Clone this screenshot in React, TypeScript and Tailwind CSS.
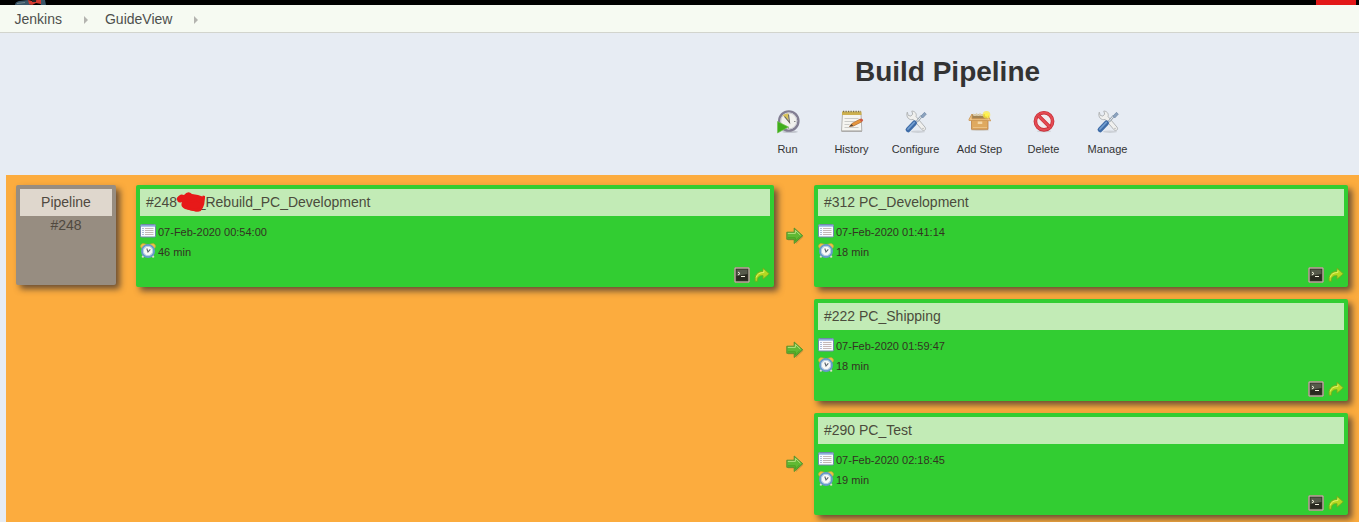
import React from "react";

function RunIcon() {
  return (
    <svg width="24" height="24" viewBox="0 0 24 24">
      <ellipse cx="14" cy="21.8" rx="8" ry="1.3" fill="#c3c7cf" />
      <circle cx="12.8" cy="11" r="9.6" fill="#f1f1ed" stroke="#827e92" strokeWidth="2.4" />
      <circle cx="12.8" cy="11" r="8" fill="none" stroke="#c9c9d0" strokeWidth="1" />
      <path d="M12.5 10.5 L6.5 5.2 Q9 3.4 12.5 3.5Z" fill="#d9c35c" />
      <path d="M8.5 6.5 L13.5 12.5 L12.5 4.5" fill="none" stroke="#66635c" strokeWidth="1.1" />
      <path d="M19.5 11.5h-1.5M12.5 18.6v-1.3" stroke="#888" />
      <path d="M1.5 11.5 L12.5 17 L1.5 23Z" fill="#3fae1c" stroke="#72c152" strokeWidth="0.7" />
    </svg>
  );
}

function HistoryIcon() {
  return (
    <svg width="24" height="24" viewBox="0 0 24 24">
      <path d="M2.5 3.5h18.5l.8 17.5H1.5z" fill="#f6f5f1" stroke="#b3b2af" />
      <path d="M1.5 21.3h20.5" stroke="#aaa9a6" strokeWidth="1.2" />
      <path d="M2 1.5h19.5v3.5H2z" fill="#cdb04f" />
      <path d="M3 1.5h18" stroke="#7b6e48" strokeWidth="1.4" strokeDasharray="1.2 1.3" />
      <path d="M4.5 8.5h14M4.5 11.5h11M4.5 14.5h5M4.5 17.5h14" stroke="#cbcbc8" />
      <path d="M9.5 16.5l2.5-3 8.2-4.5 1.8 2.7-8.5 4.3z" fill="#e6963d" stroke="#ae6a35" strokeWidth="0.7" />
      <path d="M19.3 9.4l1.8-1q2 .2 2.1 2.2l-1.8 1.3z" fill="#cf5c46" />
      <path d="M9.2 16.6l2.4-2.6 1.7 2z" fill="#574638" />
    </svg>
  );
}

function ToolsIcon() {
  return (
    <svg width="24" height="24" viewBox="0 0 24 24">
      <ellipse cx="14" cy="21.7" rx="7" ry="1.2" fill="#cdd1d7" />
      <path d="M3.3 2.1l.9 3.3 2.7.7 1.8-2-.9-3.1c3 .2 5.1 2.3 4.3 5.6l8.8 10.4c2 2.5-.9 4.7-3 2.7L9.2 9.4C5.5 10.6 1.5 7.4 3.3 2.1z" fill="#f0f0ee" stroke="#b3b6b8" strokeWidth="1" />
      <circle cx="19" cy="18.5" r=".8" fill="#bbb" />
      <path d="M12.8 11.8l5-6" stroke="#9aa6b1" strokeWidth="2.5" />
      <path d="M13 11.5l5-6" stroke="#e5eaee" strokeWidth="1" />
      <path d="M17 6l3.5-3.7 1.8 1.9L18.7 8z" fill="#8ba2bd" stroke="#6f88a8" strokeWidth=".7" />
      <path d="M4.1 19.8l6.4-6.8" stroke="#3f6ca7" strokeWidth="5" strokeLinecap="round" />
      <path d="M4 19l6.2-6.5" stroke="#739fd1" strokeWidth="1.8" strokeLinecap="round" />
    </svg>
  );
}

function BoxIcon() {
  return (
    <svg width="24" height="24" viewBox="0 0 24 24">
      <ellipse cx="12" cy="20" rx="9" ry="1" fill="#d3d0cb" />
      <path d="M4 4h15v5H4z" fill="#a28353" />
      <path d="M5 4.2q2 2 3.5 0q2 2 3.5 0q2 2 3.5 0" fill="none" stroke="#ded2b4" strokeWidth="1.8" />
      <path d="M3.5 9h16.5v10.3h-16.5z" fill="#dfa95f" stroke="#bb8144" strokeWidth=".8" />
      <path d="M4 4L1 9.3v1.2h18.5l3.2.4L20 5.5v3.3H4z" fill="#efc587" stroke="#ca9452" strokeWidth=".8" />
      <path d="M9.7 11.5h4.6v2.5H9.7z" fill="#f4d7a6" />
      <path d="M5 17.5h14" stroke="#ebc183" />
      <circle cx="18.5" cy="4.8" r="3.8" fill="#ffec3b" opacity=".7" />
      <circle cx="18.5" cy="4.8" r="1.9" fill="#fff448" />
    </svg>
  );
}

function DeleteIcon() {
  return (
    <svg width="24" height="24" viewBox="0 0 24 24">
      <ellipse cx="12" cy="21.3" rx="7" ry="1" fill="#cfd1d6" />
      <circle cx="12" cy="11.3" r="8.6" fill="#f1ebee" stroke="#c22b34" strokeWidth="3.6" />
      <circle cx="12" cy="11.3" r="8.6" fill="none" stroke="#e44a52" strokeWidth="2.2" />
      <path d="M6.3 5.6l11.5 11.5" stroke="#c9252e" strokeWidth="3.6" />
      <path d="M6.3 5.6l11.5 11.5" stroke="#e34a52" strokeWidth="2.2" />
    </svg>
  );
}

function CalendarIcon() {
  return (
    <svg className="block shrink-0" width="16" height="14" viewBox="0 0 16 14">
      <rect x=".5" y=".5" width="15" height="12.5" rx="1" fill="#f8fbff" stroke="#7188aa" />
      <path d="M1 1h14v1.7H1z" fill="#8babd9" />
      <path d="M2.5 4.5h1M2.5 6.5h1M2.5 8.5h1M2.5 10.5h1" stroke="#637daf" />
      <path d="M5 4.5h8.5M5 6.5h8.5M5 8.5h8.5M5 10.5h8.5" stroke="#c4b8b6" />
    </svg>
  );
}

function AlarmIcon() {
  return (
    <svg className="block shrink-0" width="16" height="16" viewBox="0 0 16 16">
      <path d="M4 12l-1.7 2.5M12 12l1.7 2.5" stroke="#e0e1cf" strokeWidth="2" />
      <path d="M.7 4.3Q-.2 1.2 2.8.5L6.5 1.2 2 5.6zM15.3 4.3Q16.2 1.2 13.2.5L9.5 1.2 14 5.6z" fill="#efc147" stroke="#c6a137" strokeWidth=".6" />
      <circle cx="8" cy="8" r="6" fill="#f8f9f8" stroke="#6899cb" strokeWidth="2" />
      <circle cx="8" cy="8" r="4.7" fill="none" stroke="#b6cde1" strokeWidth="1" />
      <path d="M6.8 5.5L8 9l2.3-2.7" fill="none" stroke="#58636c" strokeWidth="1.1" />
    </svg>
  );
}

function TerminalIcon() {
  return (
    <svg width="16" height="16" viewBox="0 0 16 16">
      <rect x=".6" y=".6" width="14.8" height="14.8" rx="1.2" fill="#f0e9df" stroke="#a69884" />
      <rect x="2" y="2" width="12" height="12" fill="#292a20" stroke="#3a3628" />
      <path d="M2.5 2.5h11V7l-11 2z" fill="#565a4b" />
      <path d="M4 5l2 1.5L4 8M7 9.5h4" fill="none" stroke="#f1f1dc" />
    </svg>
  );
}

function RerunIcon() {
  return (
    <svg width="16" height="16" viewBox="0 0 16 16">
      <path d="M1.2 14.3C.2 8 3.5 4.3 9 4.3V1L15.3 6.8 9 12.2V8.7C5 8.4 3.3 10 3.4 14.3z" fill="#b4d821" stroke="#6fae1f" strokeWidth=".9" />
      <path d="M2.2 10.5Q3.5 5.7 9.9 5.4V3.3" fill="none" stroke="#def264" />
    </svg>
  );
}

function FlowArrow() {
  return (
    <svg width="18" height="18" viewBox="0 0 18 18">
      <path d="M2 6.7h8V3l7.5 6.8L10 17v-3.5H2z" fill="#9b7a3e" opacity=".4" />
      <path d="M.8 5.2h7.4V1l8.5 7.7-8.5 7.8v-4.2H.8z" fill="#61b934" stroke="#508c2c" strokeWidth=".9" />
      <path d="M1.8 6.4h7.6V3.4l5 4.7" fill="none" stroke="#b4e07f" />
      <path d="M1.8 10.8h7.5v3.3l4.5-4.5" fill="none" stroke="#4ba120" />
    </svg>
  );
}

function Crumb({ label }: { label: string }) {
  return (
    <div className="flex items-center">
      <span>{label}</span>
      <svg className="ml-[21px] mr-[16px]" width="6" height="8" viewBox="0 0 6 8">
        <path d="M1 0l4 4-4 4z" fill="#b4b4b0" />
      </svg>
    </div>
  );
}

const actions = [
  { label: "Run", icon: <RunIcon /> },
  { label: "History", icon: <HistoryIcon /> },
  { label: "Configure", icon: <ToolsIcon /> },
  { label: "Add Step", icon: <BoxIcon /> },
  { label: "Delete", icon: <DeleteIcon /> },
  { label: "Manage", icon: <ToolsIcon /> },
];

function BuildCard({ title, date, duration, className }: { title: React.ReactNode; date: string; duration: string; className: string }) {
  return (
    <div className={`flex h-[102px] shrink-0 flex-col rounded-[2px] bg-[#32cd32] p-1 shadow-[4px_4px_6px_rgba(60,50,50,0.75)] ${className}`}>
      <div className="h-[27px] shrink-0 bg-[#c2ebb6] pl-1.5 text-[14px] leading-[27px] text-[#4b4b3c]">{title}</div>
      <div className="mt-2 flex h-[15px] items-start gap-[2px] text-[11px] leading-[16px] text-[#333322]">
        <CalendarIcon />
        <span>{date}</span>
      </div>
      <div className="mt-1 flex h-4 items-start gap-[2px] text-[11px] leading-[18px] text-[#333322]">
        <AlarmIcon />
        <span>{duration}</span>
      </div>
      <div className="mt-2 flex justify-end gap-1">
        <TerminalIcon />
        <RerunIcon />
      </div>
    </div>
  );
}

const downstream = [
  { title: "#312 PC_Development", date: "07-Feb-2020 01:41:14", duration: "18 min" },
  { title: "#222 PC_Shipping", date: "07-Feb-2020 01:59:47", duration: "18 min" },
  { title: "#290 PC_Test", date: "07-Feb-2020 02:18:45", duration: "19 min" },
];

export default function App() {
  return (
    <div className="flex h-[522px] w-[1359px] flex-col overflow-hidden bg-[#e7ecf3] font-['Liberation_Sans',Arial,sans-serif]">
      <header className="flex h-[5px] shrink-0 justify-between bg-black pr-[3px] pl-[15px]">
        <svg width="32" height="5" viewBox="0 0 32 5">
          <path d="M0 5Q0 2 4 1l9-1 3 5zM23 0h7l1 5h-5z" fill="#395568" />
          <path d="M2 3.5l8-1" stroke="#73858d" />
          <path d="M13 0l4 1 5-1h4v4l-5-1-4 2-3-1z" fill="#d33a31" />
          <path d="M17 0h4v2h-4z" fill="#292326" />
        </svg>
        <div className="w-10 bg-[#e21818]" />
      </header>
      <nav className="flex h-7 shrink-0 items-center border-b border-[#d2d4cd] bg-[#f6faf2] pt-[2px] pl-[14.5px] text-[14px] text-[#4d4f4d]">
        <Crumb label="Jenkins" />
        <Crumb label="GuideView" />
      </nav>
      <section className="flex h-[142px] shrink-0 flex-col items-center pl-[536px]">
        <h1 className="mt-[23px] text-[28px] leading-8 font-bold text-[#333333]">Build Pipeline</h1>
        <div className="mt-[22px] flex">
          {actions.map((action) => (
            <div key={action.label} className="flex w-16 flex-col items-center">
              {action.icon}
              <span className="mt-[8px] text-[11px] leading-[14px] whitespace-nowrap text-[#333333]">{action.label}</span>
            </div>
          ))}
        </div>
      </section>
      <main className="ml-1.5 flex min-h-0 flex-1 items-start bg-[#fcac3e] pt-2.5 pl-2.5">
        <div className="h-[100px] w-[100px] shrink-0 rounded-[2px] bg-[#978d81] p-1 text-center text-[14px] text-[#504940] shadow-[4px_4px_6px_rgba(60,50,50,0.75)]">
          <div className="h-[27px] bg-[#dfd7cd] leading-[27px]">Pipeline</div>
          <div className="leading-[18px]">#248</div>
        </div>
        <BuildCard
          className="ml-5 w-[638px]"
          title={
            <span className="flex">
              <span>#248</span>
              <svg className="relative z-10 mt-[2px] -ml-px" width="29" height="23" viewBox="0 0 29 23">
                <path d="M1 7Q4 2 8 4Q12-1 16 3L22 4L28 6L27 16Q24 22 18 20L9 18Q4 16 6 11Q1 13 1 7Z" fill="#e71919" />
                <path d="M2 8Q7 3 10 8T22 8M22 7Q22 12 26 10L28 5L27 13Q25 20 22 18M8 15Q15 20 24 19" fill="none" stroke="#e71919" strokeWidth="2.5" strokeLinecap="round" />
              </svg>
              <span className="-ml-[7.5px]">_Rebuild_PC_Development</span>
            </span>
          }
          date="07-Feb-2020 00:54:00"
          duration="46 min"
        />
        <div className="ml-3 flex flex-col gap-3">
          {downstream.map((build) => (
            <div key={build.title} className="flex items-center">
              <FlowArrow />
              <BuildCard {...build} className="ml-2.5 w-[534px]" />
            </div>
          ))}
        </div>
      </main>
    </div>
  );
}
